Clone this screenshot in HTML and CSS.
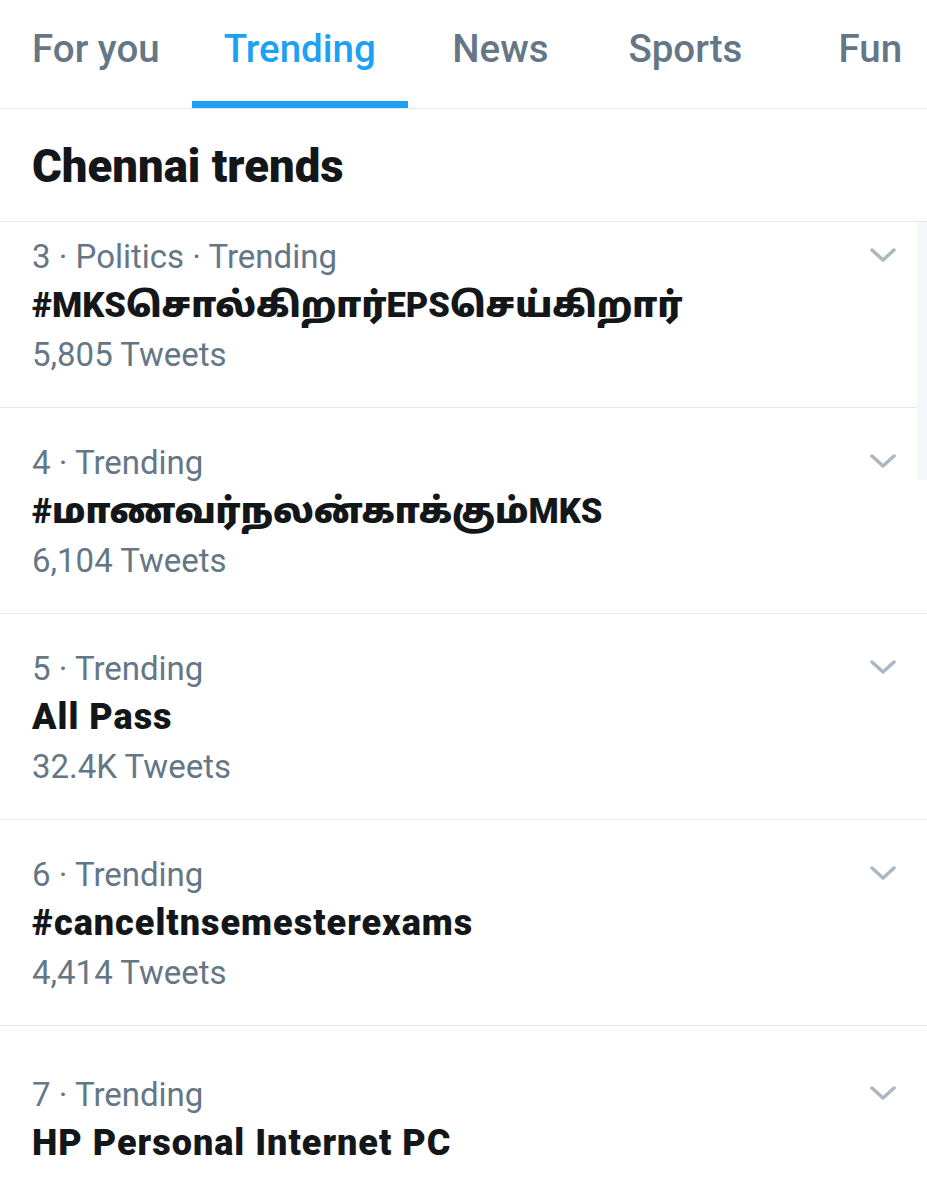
FILE: index.html
```html
<!DOCTYPE html>
<html lang="en">
<head>
    <meta charset="UTF-8">
    <meta name="viewport" content="width=device-width, initial-scale=1.0">
    <title>Trending</title>
    <link rel="stylesheet" href="styles.css">
</head>
<body>

<nav class="tabs">
    <a class="tab">For you</a>
    <a class="tab active">Trending</a>
    <a class="tab">News</a>
    <a class="tab">Sports</a>
    <a class="tab">Fun</a>
</nav>

<div class="header">
    <h2>Chennai trends</h2>
</div>

<div class="list">
    <div class="scrollbar"></div>

    <div class="trend first">
        <div class="info">
            <div class="meta">3 · Politics · Trending</div>
            <div class="name tamil">#MKSசொல்கிறார்EPSசெய்கிறார்</div>
            <div class="count">5,805 Tweets</div>
        </div>
        <svg class="chevron" viewBox="0 0 26 15"><path d="M2 2 L13 12 L24 2"/></svg>
    </div>

    <div class="trend">
        <div class="info">
            <div class="meta">4 · Trending</div>
            <div class="name tamil">#மாணவர்நலன்காக்கும்MKS</div>
            <div class="count">6,104 Tweets</div>
        </div>
        <svg class="chevron" viewBox="0 0 26 15"><path d="M2 2 L13 12 L24 2"/></svg>
    </div>

    <div class="trend">
        <div class="info">
            <div class="meta">5 · Trending</div>
            <div class="name">All Pass</div>
            <div class="count">32.4K Tweets</div>
        </div>
        <svg class="chevron" viewBox="0 0 26 15"><path d="M2 2 L13 12 L24 2"/></svg>
    </div>

    <div class="trend">
        <div class="info">
            <div class="meta">6 · Trending</div>
            <div class="name">#canceltnsemesterexams</div>
            <div class="count">4,414 Tweets</div>
        </div>
        <svg class="chevron" viewBox="0 0 26 15"><path d="M2 2 L13 12 L24 2"/></svg>
    </div>

    <div class="trend last">
        <div class="info">
            <div class="meta">7 · Trending</div>
            <div class="name">HP Personal Internet PC</div>
        </div>
        <svg class="chevron" viewBox="0 0 26 15"><path d="M2 2 L13 12 L24 2"/></svg>
    </div>
</div>

</body>
</html>
```

FILE: styles.css
```css
body {
    margin: 0;
    padding: 0;
    background-color: #fff;
    color: #14171a;
    font-family: Roboto, "Noto Sans Tamil", "Noto Sans", Arial, sans-serif;
    overflow: hidden;
}

/* Tabs */
.tabs {
    display: flex;
    border-bottom: 1px solid #e1e8ed;
    white-space: nowrap;
}
.tab {
    flex: none;
    min-width: 185px;
    box-sizing: border-box;
    padding: 27px 32px 30px;
    text-align: center;
    font-size: 38.5px;
    line-height: 44px;
    font-weight: 500;
    color: #657786;
    border-bottom: 7px solid transparent;
}
.tab.active {
    color: #1da1f2;
    border-bottom-color: #1da1f2;
}

/* Header */
.header {
    padding: 33px 32px 29px;
    border-bottom: 1px solid #e1e8ed;
}
.header h2 {
    margin: 0;
    font-size: 45.5px;
    line-height: 50px;
    font-weight: 900;
}

/* Trends */
.list {
    position: relative;
}
.scrollbar {
    position: absolute;
    top: 0;
    right: 0;
    width: 10px;
    height: 258px;
    background-color: #f5f8fa;
}
.trend {
    display: flex;
    justify-content: space-between;
    align-items: flex-start;
    padding: 30px 31px 28px 32px;
    border-bottom: 1px solid #e1e8ed;
}
.trend.first {
    padding-top: 10px;
}
.trend.last {
    padding-top: 44px;
    border-bottom: none;
}
.meta, .count {
    font-size: 33px;
    line-height: 49px;
    color: #657786;
}
.name {
    font-size: 36px;
    line-height: 49px;
    font-weight: 900;
    letter-spacing: 1px;
}
.name.tamil {
    font-size: 34.5px;
    letter-spacing: 0;
}
.chevron {
    width: 26px;
    height: 15px;
    margin-top: 16px;
    fill: none;
    stroke: #aab8c2;
    stroke-width: 3.5;
    stroke-linecap: round;
    stroke-linejoin: round;
}
```
